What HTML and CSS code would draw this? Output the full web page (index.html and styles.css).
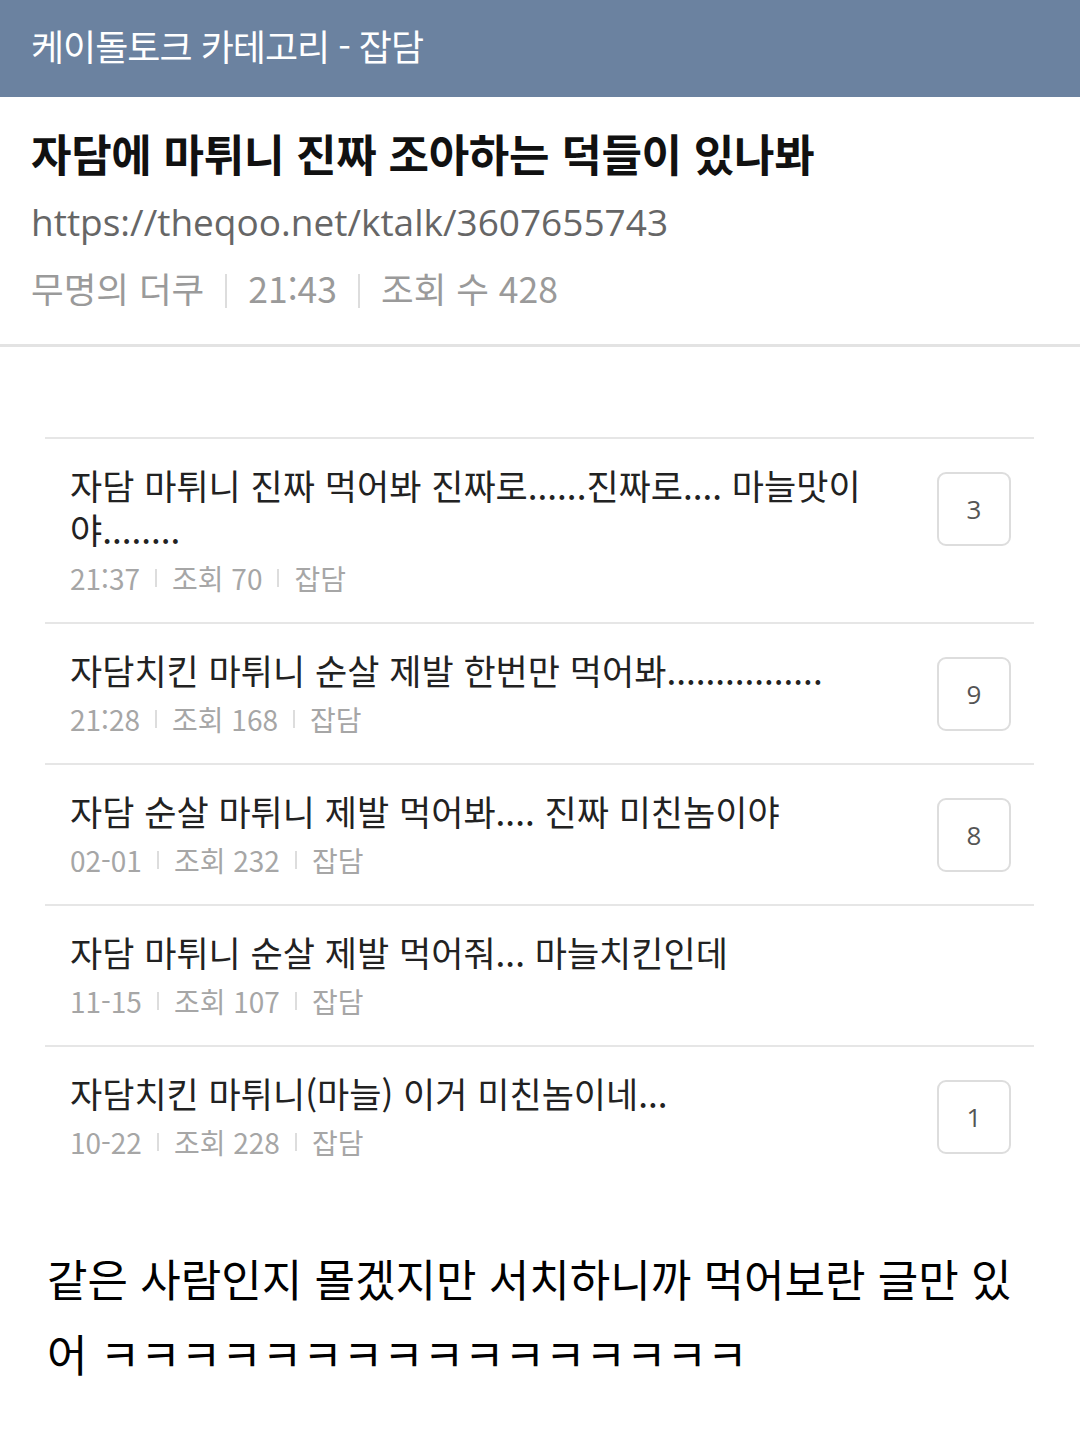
FILE: index.html
```html
<!DOCTYPE html>
<html lang="ko">
<head>
  <meta charset="UTF-8">
  <meta name="viewport" content="width=device-width, initial-scale=1">
  <title>자담에 마튀니 진짜 조아하는 덕들이 있나봐</title>
  <link rel="stylesheet" href="styles.css">
</head>

<body>

  <div class="barra">케이돌토크 카테고리 - 잡담</div>

  <div class="cabecera">
    <h1 class="titulo">자담에 마튀니 진짜 조아하는 덕들이 있나봐</h1>
    <div class="enlace">https://theqoo.net/ktalk/3607655743</div>
    <div class="datos">
      <span>무명의 더쿠</span>
      <span class="sep"></span>
      <span>21:43</span>
      <span class="sep"></span>
      <span>조회 수 428</span>
    </div>
  </div>

  <ul class="lista">
    <li class="fila">
      <div class="texto">
        <div class="asunto">자담 마튀니 진짜 먹어봐 진짜로......진짜로.... 마늘맛이 야........</div>
        <div class="info"><span>21:37</span><i></i><span>조회 70</span><i></i><span>잡담</span></div>
      </div>
      <div class="comentarios">3</div>
    </li>
    <li class="fila">
      <div class="texto">
        <div class="asunto">자담치킨 마튀니 순살 제발 한번만 먹어봐................</div>
        <div class="info"><span>21:28</span><i></i><span>조회 168</span><i></i><span>잡담</span></div>
      </div>
      <div class="comentarios">9</div>
    </li>
    <li class="fila">
      <div class="texto">
        <div class="asunto">자담 순살 마튀니 제발 먹어봐.... 진짜 미친놈이야</div>
        <div class="info"><span>02-01</span><i></i><span>조회 232</span><i></i><span>잡담</span></div>
      </div>
      <div class="comentarios">8</div>
    </li>
    <li class="fila">
      <div class="texto">
        <div class="asunto">자담 마튀니 순살 제발 먹어줘... 마늘치킨인데</div>
        <div class="info"><span>11-15</span><i></i><span>조회 107</span><i></i><span>잡담</span></div>
      </div>
    </li>
    <li class="fila">
      <div class="texto">
        <div class="asunto">자담치킨 마튀니(마늘) 이거 미친놈이네...</div>
        <div class="info"><span>10-22</span><i></i><span>조회 228</span><i></i><span>잡담</span></div>
      </div>
      <div class="comentarios">1</div>
    </li>
  </ul>

  <p class="cuerpo">같은 사람인지 몰겠지만 서치하니까 먹어보란 글만 있어 ㅋㅋㅋㅋㅋㅋㅋㅋㅋㅋㅋㅋㅋㅋㅋㅋ</p>

</body>
</html>
```

FILE: styles.css
```css
body {
  margin: 0;
  font-family: 'Noto Sans CJK KR', sans-serif;
  background: #ffffff;
  color: #222;
}

.barra {
  height: 97px;
  box-sizing: border-box;
  padding: 0 31px 8px;
  display: flex;
  align-items: center;
  background: #6b82a0;
  color: #ffffff;
  font-size: 36px;
  letter-spacing: -1px;
}

.cabecera {
  padding: 26px 31px 23px;
  border-bottom: 3px solid #e3e3e3;
}

.titulo {
  margin: 0;
  font-size: 44px;
  line-height: 60px;
  font-weight: bold;
  color: #111;
  letter-spacing: -0.3px;
}

.enlace {
  margin-top: 6px;
  font-family: 'Open Sans', 'Noto Sans CJK KR', sans-serif;
  font-size: 37px;
  line-height: 66px;
  color: #666;
}

.datos {
  display: flex;
  align-items: center;
  gap: 21px;
  font-size: 35.5px;
  line-height: 66px;
  color: #9a9a9a;
}

.datos .sep {
  width: 2px;
  height: 34px;
  margin-top: 6px;
  background: #dddddd;
}

.lista {
  list-style: none;
  margin: 90px 46px 0 45px;
  padding: 0;
}

.fila {
  display: flex;
  align-items: flex-start;
  padding: 24px 0 26px 25px;
  border-top: 2px solid #e6e6e6;
}

.texto {
  flex: 1;
  margin-right: 62px;
}

.asunto {
  font-size: 35px;
  line-height: 44px;
  color: #222;
}

.info {
  display: flex;
  align-items: center;
  gap: 15px;
  margin-top: 9px;
  font-size: 28px;
  line-height: 36px;
  color: #a6a6a6;
}

.info i {
  width: 2px;
  height: 18px;
  background: #dddddd;
}

.comentarios {
  flex: 0 0 auto;
  width: 74px;
  height: 74px;
  box-sizing: border-box;
  margin: 9px 23px 0 0;
  display: flex;
  align-items: center;
  justify-content: center;
  border: 2px solid #dddddd;
  border-radius: 9px;
  font-family: 'Open Sans', sans-serif;
  font-size: 26px;
  color: #555;
}

.cuerpo {
  margin: 55px 0 0;
  padding: 0 48px 0 47px;
  font-size: 44px;
  line-height: 75px;
  color: #000;
}
```
